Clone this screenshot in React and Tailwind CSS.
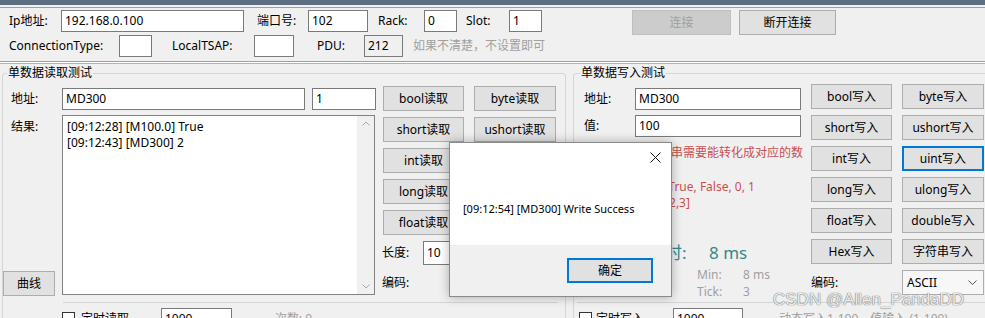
import React from "react";

const font = "font-['Noto_Sans','Noto_Sans_CJK_SC',sans-serif]";

const Lbl = ({ className = "", children }) => (
  <div className={`flex h-[22px] shrink-0 items-center whitespace-nowrap ${className}`}>{children}</div>
);

const TextBox = ({ className = "", children, gray }) => (
  <div
    className={`flex shrink-0 items-center overflow-hidden whitespace-nowrap border border-[#7a7a7a] px-[3px] leading-none ${
      gray ? "bg-[#f0f0f0]" : "bg-white"
    } ${className}`}
  >
    {children}
  </div>
);

const Btn = ({ className = "", children, focus, disabled }) => (
  <button
    className={`flex h-[25px] shrink-0 items-center justify-center whitespace-nowrap leading-none ${
      focus ? "border-2 border-[#0078d7]" : disabled ? "border border-[#bfbfbf]" : "border border-[#adadad]"
    } ${disabled ? "bg-[#cccccc] text-[#a0a0a0]" : "bg-[#e1e1e1]"} ${className}`}
  >
    {children}
  </button>
);

const Check = () => <div className="size-[13px] shrink-0 border border-[#333] bg-white" />;

const readBtns = ["bool读取", "byte读取", "short读取", "ushort读取", "int读取", "uint读取", "long读取", "ulong读取", "float读取", "double读取"];
const writeBtns = ["bool写入", "byte写入", "short写入", "ushort写入", "int写入", "uint写入", "long写入", "ulong写入", "float写入", "double写入", "Hex写入", "字符串写入"];

export default function App() {
  return (
    <div className={`relative h-[318px] w-[985px] overflow-hidden bg-[#f0f0f0] text-[12px] text-black ${font}`}>
      <div className="h-[5px] bg-[#5d6d82]" />
      <div className="h-[2px]" />
      <div className="h-px bg-[#a0a0a0]" />

      {/* connection panel */}
      <div className="h-[54px] border-b border-[#a0a0a0] pt-[2px]">
        <div className="flex h-[22px] items-start">
          <Lbl className="w-[61px] pl-[9px]">Ip地址:</Lbl>
          <TextBox className="h-[22px] w-[183px]">192.168.0.100</TextBox>
          <Lbl className="w-[64px] pl-[13px]">端口号:</Lbl>
          <TextBox className="h-[22px] w-[60px]">102</TextBox>
          <Lbl className="w-[56px] pl-[10px]">Rack:</Lbl>
          <TextBox className="h-[22px] w-[33px]">0</TextBox>
          <Lbl className="w-[52px] pl-[9px]">Slot:</Lbl>
          <TextBox className="h-[22px] w-[33px]">1</TextBox>
          <Btn disabled className="ml-[90px] w-[99px]">连接</Btn>
          <Btn className="ml-[8px] w-[97px]">断开连接</Btn>
        </div>
        <div className="mt-[3px] flex h-[22px] items-start">
          <Lbl className="w-[119px] pl-[9px]">ConnectionType:</Lbl>
          <TextBox className="h-[22px] w-[33px]" />
          <Lbl className="w-[102px] pl-[20px]">LocalTSAP:</Lbl>
          <TextBox className="h-[22px] w-[40px]" />
          <Lbl className="w-[70px] pl-[23px]">PDU:</Lbl>
          <TextBox gray className="h-[22px] w-[39px]">212</TextBox>
          <Lbl className="ml-[10px] text-[#a0a0a0]">如果不清楚，不设置即可</Lbl>
        </div>
      </div>
      <div className="h-px bg-white" />
      <div className="h-px bg-[#b4b4b4]" />

      <div className="flex h-[254px] items-start">
        {/* read group */}
        <fieldset className="ml-[2px] h-[280px] w-[564px] shrink-0 rounded-[3px] border border-[#d5d5d5]">
          <legend className="ml-[4px] px-px leading-[18px]">单数据读取测试</legend>
          <div className="flex h-[220px] pt-[4px]">
            <div className="w-[373px] shrink-0">
              <div className="flex h-[25px] items-center">
                <div className="w-[59px] shrink-0 pl-[8px]">地址:</div>
                <TextBox className="h-[22px] w-[243px]">MD300</TextBox>
                <TextBox className="ml-[7px] h-[22px] w-[64px]">1</TextBox>
              </div>
              <div className="mt-[4px] flex h-[181px]">
                <div className="flex w-[59px] shrink-0 flex-col">
                  <div className="pl-[8px] pt-[4px] leading-[16px]">结果:</div>
                  <Btn className="mt-auto h-[24px] w-[52px]">曲线</Btn>
                </div>
                <div className="flex h-[180px] w-[313px] shrink-0 border border-[#828282] bg-white">
                  <div className="flex-1 pl-[4px] pt-[3px] leading-[16px]">
                    <div>[09:12:28] [M100.0] True</div>
                    <div>[09:12:43] [MD300] 2</div>
                  </div>
                  <div className="flex w-[17px] flex-col items-center justify-between bg-[#f0f0f0] py-[5px]">
                    <svg width="8" height="5" viewBox="0 0 8 5"><path d="M0.5 4.5 L4 1 L7.5 4.5" fill="none" stroke="#a8a8a8" /></svg>
                    <svg width="8" height="5" viewBox="0 0 8 5"><path d="M0.5 0.5 L4 4 L7.5 0.5" fill="none" stroke="#a8a8a8" /></svg>
                  </div>
                </div>
              </div>
            </div>
            <div className="ml-[7px] w-[173px] shrink-0">
              <div className="grid grid-cols-[81px_82px] gap-x-[10px] gap-y-[6px]">
                {readBtns.map((t) => (
                  <Btn key={t}>{t}</Btn>
                ))}
              </div>
              <div className="mt-[6px] flex h-[24px] items-center">
                <div className="-ml-px w-[41px] shrink-0">长度:</div>
                <TextBox className="h-[24px] w-[133px]">10</TextBox>
              </div>
              <div className="mt-[6px] flex h-[24px] items-center">
                <div className="-ml-px">编码:</div>
              </div>
            </div>
          </div>
          <div className="ml-[60px] flex w-[495px] items-start border-t border-[#d5d5d5]">
            <div className="-ml-px mt-[9px]"><Check /></div>
            <div className="ml-[6px] mt-[9px] w-[80px] leading-[14px]">定时读取</div>
            <TextBox className="mt-[5px] h-[22px] w-[71px]">1000</TextBox>
            <div className="ml-[43px] mt-[9px] leading-[14px] text-[#a0a0a0]">次数: 0</div>
          </div>
        </fieldset>

        {/* write group */}
        <fieldset className="ml-[7px] h-[280px] w-[420px] shrink-0 rounded-[3px] border border-[#d5d5d5]">
          <legend className="ml-[6px] px-px leading-[18px]">单数据写入测试</legend>
          <div className="flex h-[220px] pt-[2px]">
            <div className="w-[227px] shrink-0">
              <div className="mt-[4px] flex h-[22px] items-center">
                <div className="w-[61px] shrink-0 pl-[10px]">地址:</div>
                <TextBox className="h-[22px] w-[166px]">MD300</TextBox>
              </div>
              <div className="mt-[5px] flex h-[22px] items-center">
                <div className="w-[61px] shrink-0 pl-[10px]">值:</div>
                <TextBox className="h-[22px] w-[166px]">100</TextBox>
              </div>
              <div className="mt-[8px] whitespace-nowrap pl-[73px] leading-[16px] text-[#cc4f4f]">字符串需要能转化成对应的数</div>
              <div className="mt-[18px] whitespace-nowrap pl-[63px] leading-[16px] text-[#cc4f4f]">bool: True, False, 0, 1</div>
              <div className="whitespace-nowrap pl-[81px] leading-[16px] text-[#cc4f4f]">[1,2,3]</div>
              <div className="mt-[31px] flex whitespace-nowrap pl-[74px] text-[17px] leading-[22px] text-[#2e8b8b]">
                <div className="w-[61px]">耗时:</div>
                <div>8 ms</div>
              </div>
              <div className="mt-[3px] flex pl-[123px] leading-[16px] text-[#a0a0a0]">
                <div className="w-[46px]">Min:</div>
                <div>8 ms</div>
              </div>
              <div className="mt-px flex pl-[123px] leading-[16px] text-[#a0a0a0]">
                <div className="w-[46px]">Tick:</div>
                <div>3</div>
              </div>
            </div>
            <div className="ml-[10px] w-[173px] shrink-0">
              <div className="grid grid-cols-[81px_82px] gap-x-[10px] gap-y-[6px]">
                {writeBtns.map((t) => (
                  <Btn key={t} focus={t === "uint写入"}>{t}</Btn>
                ))}
              </div>
              <div className="mt-[6px] flex h-[25px] items-center">
                <div className="w-[91px] shrink-0">编码:</div>
                <div className="flex h-[25px] w-[82px] items-center justify-between border border-[#adadad] bg-[#f7f7f7] pl-[4px] pr-[6px]">
                  <span>ASCII</span>
                  <svg width="9" height="5" viewBox="0 0 9 5"><path d="M0.5 0.5 L4.5 4.5 L8.5 0.5" fill="none" stroke="#555" /></svg>
                </div>
              </div>
            </div>
          </div>
          <div className="ml-[3px] flex items-start border-t border-[#d5d5d5]">
            <div className="ml-[2px] mt-[9px]"><Check /></div>
            <div className="ml-[4px] mt-[9px] w-[77px] leading-[14px]">定时写入</div>
            <TextBox className="mt-[5px] h-[22px] w-[70px]">1000</TextBox>
            <div className="ml-[36px] mt-[9px] whitespace-nowrap leading-[14px] text-[#a0a0a0]">动态写入1-100，值输入 (1-100)</div>
          </div>
        </fieldset>
      </div>

      {/* message box */}
      <div className="absolute left-[449px] top-[142px] flex h-[155px] w-[223px] flex-col border border-[#8a8a8a] bg-white shadow-[0_0_10px_rgba(0,0,0,0.3)]">
        <div className="h-[102px]">
          <div className="flex h-[28px] items-center justify-end pr-[10px]">
            <svg width="11" height="11" viewBox="0 0 11 11"><path d="M0.5 0.5 L10.5 10.5 M10.5 0.5 L0.5 10.5" stroke="#111" strokeWidth="1" /></svg>
          </div>
          <div className="mt-[30px] whitespace-nowrap pl-[13px] text-[11px] leading-[16px]">[09:12:54] [MD300] Write Success</div>
        </div>
        <div className="flex flex-1 justify-end bg-[#f0f0f0] pr-[18px] pt-[13px]">
          <Btn focus className="w-[86px]">确定</Btn>
        </div>
      </div>

      {/* watermark */}
      <div className="absolute left-[773px] top-[290px] whitespace-nowrap font-['Liberation_Sans',sans-serif] text-[17px] leading-[20px] text-[#ececec] [text-shadow:0_0_1px_#6f6f6f,0_0_1px_#6f6f6f]">
        CSDN @Allen_PandaDD
      </div>
    </div>
  );
}
